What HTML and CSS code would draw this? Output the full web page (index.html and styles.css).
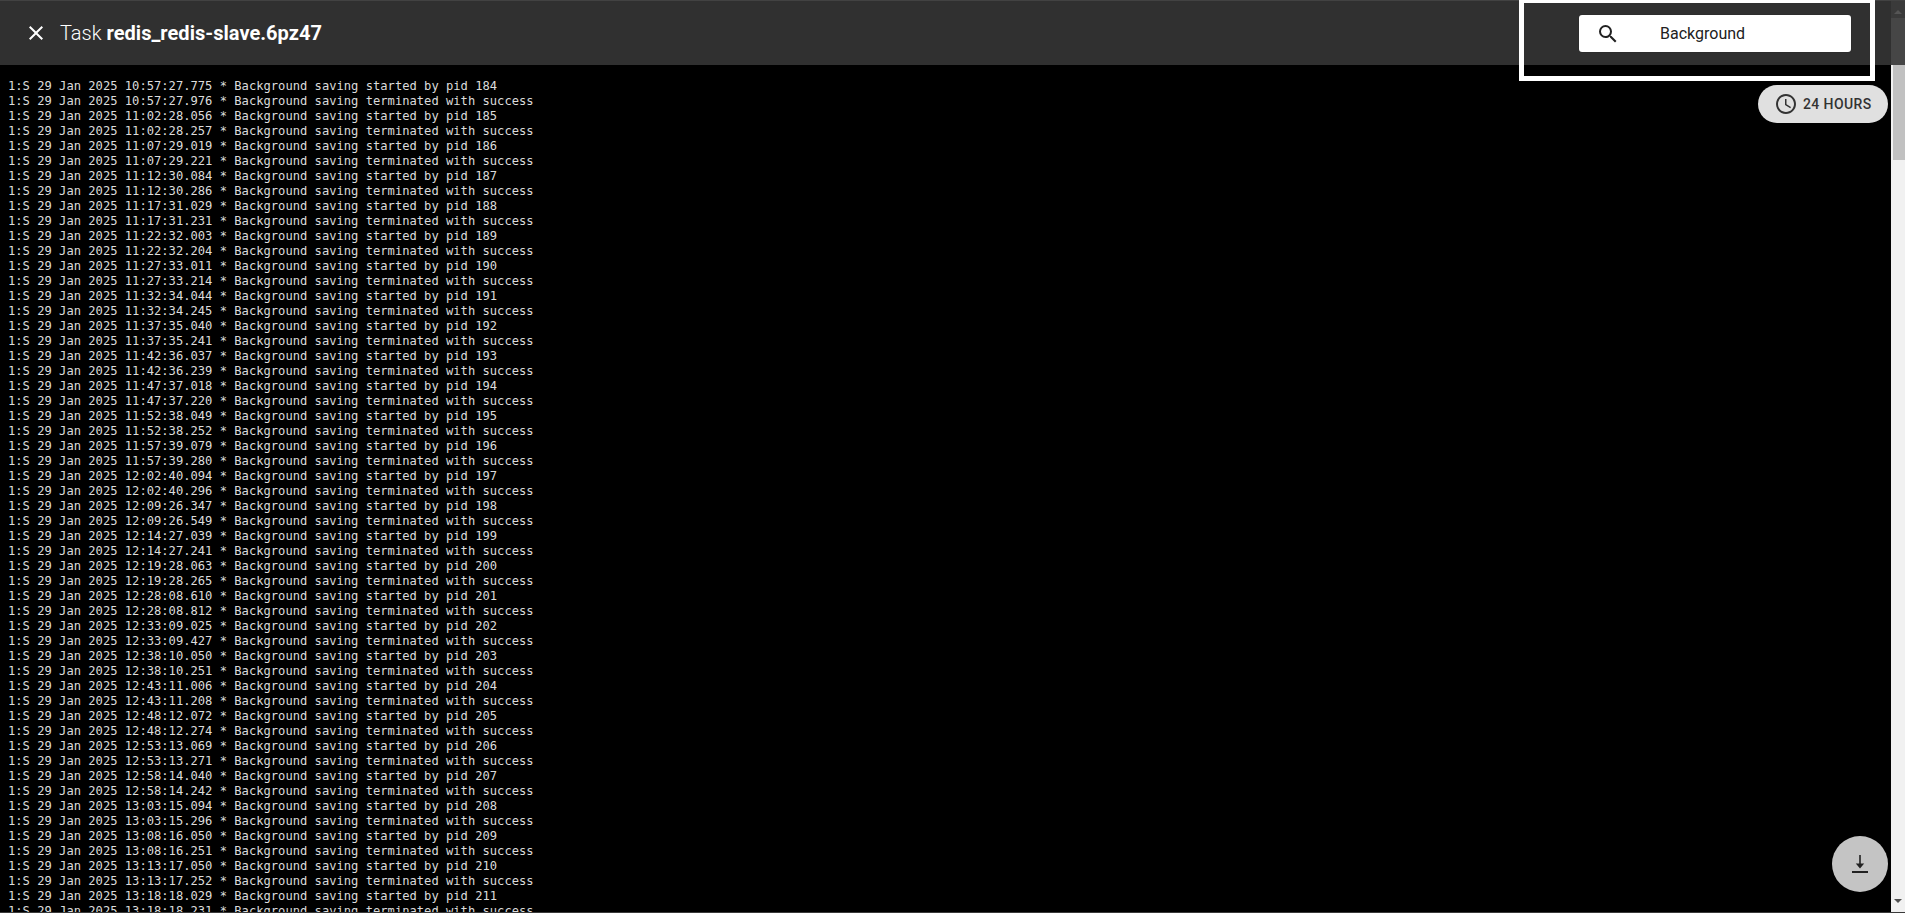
FILE: index.html
```html
<!DOCTYPE html>
<html lang="en">
<head>
<meta charset="utf-8">
<title>Task redis_redis-slave.6pz47</title>
<link rel="stylesheet" href="styles.css">
</head>
<body>
<div class="shell">
  <header class="topbar">
    <svg class="close-icon" viewBox="0 0 24 24" width="24" height="24"><path d="M19 6.41 17.59 5 12 10.59 6.41 5 5 6.41 10.59 12 5 17.59 6.41 19 12 13.41 17.59 19 19 17.59 13.41 12z"/></svg>
    <h1 class="title">Task <strong>redis_redis-slave.6pz47</strong></h1>
    <div class="search-focus">
      <div class="search">
        <svg class="search-icon" viewBox="0 0 24 24" width="24" height="24"><path d="M15.5 14h-.79l-.28-.27A6.471 6.471 0 0 0 16 9.5 6.5 6.5 0 1 0 9.5 16c1.61 0 3.09-.59 4.23-1.57l.27.28v.79l5 4.99L20.49 19l-4.99-5zm-6 0C7.01 14 5 11.99 5 9.5S7.01 5 9.5 5 14 7.01 14 9.5 11.99 14 9.5 14z"/></svg>
        <span class="search-text">Background</span>
      </div>
    </div>
    <div class="bar-scroll"><span class="arrow-up"></span><span class="bar-thumb"></span></div>
  </header>
  <div class="content">
    <main class="log">
      <div>1:S 29 Jan 2025 10:57:27.775 * Background saving started by pid 184</div>
      <div>1:S 29 Jan 2025 10:57:27.976 * Background saving terminated with success</div>
      <div>1:S 29 Jan 2025 11:02:28.056 * Background saving started by pid 185</div>
      <div>1:S 29 Jan 2025 11:02:28.257 * Background saving terminated with success</div>
      <div>1:S 29 Jan 2025 11:07:29.019 * Background saving started by pid 186</div>
      <div>1:S 29 Jan 2025 11:07:29.221 * Background saving terminated with success</div>
      <div>1:S 29 Jan 2025 11:12:30.084 * Background saving started by pid 187</div>
      <div>1:S 29 Jan 2025 11:12:30.286 * Background saving terminated with success</div>
      <div>1:S 29 Jan 2025 11:17:31.029 * Background saving started by pid 188</div>
      <div>1:S 29 Jan 2025 11:17:31.231 * Background saving terminated with success</div>
      <div>1:S 29 Jan 2025 11:22:32.003 * Background saving started by pid 189</div>
      <div>1:S 29 Jan 2025 11:22:32.204 * Background saving terminated with success</div>
      <div>1:S 29 Jan 2025 11:27:33.011 * Background saving started by pid 190</div>
      <div>1:S 29 Jan 2025 11:27:33.214 * Background saving terminated with success</div>
      <div>1:S 29 Jan 2025 11:32:34.044 * Background saving started by pid 191</div>
      <div>1:S 29 Jan 2025 11:32:34.245 * Background saving terminated with success</div>
      <div>1:S 29 Jan 2025 11:37:35.040 * Background saving started by pid 192</div>
      <div>1:S 29 Jan 2025 11:37:35.241 * Background saving terminated with success</div>
      <div>1:S 29 Jan 2025 11:42:36.037 * Background saving started by pid 193</div>
      <div>1:S 29 Jan 2025 11:42:36.239 * Background saving terminated with success</div>
      <div>1:S 29 Jan 2025 11:47:37.018 * Background saving started by pid 194</div>
      <div>1:S 29 Jan 2025 11:47:37.220 * Background saving terminated with success</div>
      <div>1:S 29 Jan 2025 11:52:38.049 * Background saving started by pid 195</div>
      <div>1:S 29 Jan 2025 11:52:38.252 * Background saving terminated with success</div>
      <div>1:S 29 Jan 2025 11:57:39.079 * Background saving started by pid 196</div>
      <div>1:S 29 Jan 2025 11:57:39.280 * Background saving terminated with success</div>
      <div>1:S 29 Jan 2025 12:02:40.094 * Background saving started by pid 197</div>
      <div>1:S 29 Jan 2025 12:02:40.296 * Background saving terminated with success</div>
      <div>1:S 29 Jan 2025 12:09:26.347 * Background saving started by pid 198</div>
      <div>1:S 29 Jan 2025 12:09:26.549 * Background saving terminated with success</div>
      <div>1:S 29 Jan 2025 12:14:27.039 * Background saving started by pid 199</div>
      <div>1:S 29 Jan 2025 12:14:27.241 * Background saving terminated with success</div>
      <div>1:S 29 Jan 2025 12:19:28.063 * Background saving started by pid 200</div>
      <div>1:S 29 Jan 2025 12:19:28.265 * Background saving terminated with success</div>
      <div>1:S 29 Jan 2025 12:28:08.610 * Background saving started by pid 201</div>
      <div>1:S 29 Jan 2025 12:28:08.812 * Background saving terminated with success</div>
      <div>1:S 29 Jan 2025 12:33:09.025 * Background saving started by pid 202</div>
      <div>1:S 29 Jan 2025 12:33:09.427 * Background saving terminated with success</div>
      <div>1:S 29 Jan 2025 12:38:10.050 * Background saving started by pid 203</div>
      <div>1:S 29 Jan 2025 12:38:10.251 * Background saving terminated with success</div>
      <div>1:S 29 Jan 2025 12:43:11.006 * Background saving started by pid 204</div>
      <div>1:S 29 Jan 2025 12:43:11.208 * Background saving terminated with success</div>
      <div>1:S 29 Jan 2025 12:48:12.072 * Background saving started by pid 205</div>
      <div>1:S 29 Jan 2025 12:48:12.274 * Background saving terminated with success</div>
      <div>1:S 29 Jan 2025 12:53:13.069 * Background saving started by pid 206</div>
      <div>1:S 29 Jan 2025 12:53:13.271 * Background saving terminated with success</div>
      <div>1:S 29 Jan 2025 12:58:14.040 * Background saving started by pid 207</div>
      <div>1:S 29 Jan 2025 12:58:14.242 * Background saving terminated with success</div>
      <div>1:S 29 Jan 2025 13:03:15.094 * Background saving started by pid 208</div>
      <div>1:S 29 Jan 2025 13:03:15.296 * Background saving terminated with success</div>
      <div>1:S 29 Jan 2025 13:08:16.050 * Background saving started by pid 209</div>
      <div>1:S 29 Jan 2025 13:08:16.251 * Background saving terminated with success</div>
      <div>1:S 29 Jan 2025 13:13:17.050 * Background saving started by pid 210</div>
      <div>1:S 29 Jan 2025 13:13:17.252 * Background saving terminated with success</div>
      <div>1:S 29 Jan 2025 13:18:18.029 * Background saving started by pid 211</div>
      <div>1:S 29 Jan 2025 13:18:18.231 * Background saving terminated with success</div>
    </main>
    <div class="scrollbar"><span class="thumb"></span><span class="track-fill"></span><span class="arrow-down"></span></div>
    <button class="chip" type="button">
      <svg viewBox="0 0 24 24" width="24" height="24"><path d="M11.99 2C6.47 2 2 6.48 2 12s4.47 10 9.99 10C17.52 22 22 17.52 22 12S17.52 2 11.99 2zM12 20c-4.42 0-8-3.58-8-8s3.58-8 8-8 8 3.58 8 8-3.58 8-8 8zm.5-13H11v6l5.25 3.15.75-1.23-4.5-2.67z"/></svg>
      <span>24 HOURS</span>
    </button>
    <button class="fab" type="button">
      <svg viewBox="0 0 24 24" width="24" height="24"><path d="M4 19h16v2H4zM11.2 3h1.6v8.5h3.4L12 16.5l-4.2-5h3.4z"/></svg>
    </button>
  </div>
</div>
</body>
</html>
```

FILE: styles.css
```css
* { box-sizing: border-box; }
html, body { margin: 0; height: 100%; overflow: hidden; background: #000; }
.shell {
  display: flex;
  flex-direction: column;
  height: 100vh;
  border-bottom: 1px solid #3a3a3a;
  font-family: Roboto, "Liberation Sans", sans-serif;
}
.topbar {
  position: relative;
  z-index: 2;
  flex: 0 0 65px;
  min-height: 0;
  display: flex;
  align-items: flex-start;
  background: #303030;
  border-top: 1px solid #424242;
  color: #fff;
}
.close-icon { flex: none; margin: 20px 0 0 24px; fill: #fff; }
.title {
  margin: 19px 0 0 12px;
  font-size: 20px;
  line-height: 26px;
  font-weight: 300;
  letter-spacing: .03px;
  white-space: nowrap;
}
.title strong { font-weight: 700; }
.search-focus {
  flex: none;
  margin: 2px 21px 0 auto;
  width: 346px;
  height: 73px;
  padding: 12px 19px 0 55px;
  outline: 5px solid #fff;
}
.search {
  display: flex;
  align-items: center;
  height: 37px;
  padding-left: 17px;
  background: #fff;
  border-radius: 3px;
  box-shadow: 0 0 1px rgba(0,0,0,.5);
  color: #212121;
  font-size: 16px;
}
.search-icon { flex: none; fill: #212121; }
.search-text { margin-left: 40px; }
.bar-scroll {
  flex: 0 0 14px;
  height: 64px;
  display: flex;
  flex-direction: column;
  align-items: center;
  background: #3a3a3a;
}
.arrow-up {
  margin-top: 9px;
  border: 4px solid transparent;
  border-top: 0;
  border-bottom: 4px solid #555;
}
.bar-thumb { margin-top: 4px; flex: 1; width: 100%; background: #464646; }
.content { position: relative; flex: 1; min-height: 0; display: flex; }
.log {
  flex: 1;
  min-width: 0;
  padding: 14px 0 0 8px;
  overflow: hidden;
  background: #000;
  color: #dcdcdc;
  font-family: "DejaVu Sans Mono", "Liberation Mono", monospace;
  font-size: 12.13px;
  line-height: 15px;
  white-space: nowrap;
}
.scrollbar {
  flex: 0 0 14px;
  display: flex;
  flex-direction: column;
  align-items: center;
  background: #f1f1f1;
}
.thumb { flex: 0 0 95px; width: 100%; background: #c1c1c1; border-left: 2px solid #f1f1f1; }
.track-fill { flex: 1; }
.arrow-down {
  margin-bottom: 9px;
  border: 4px solid transparent;
  border-bottom: 0;
  border-top: 4px solid #505050;
}
.chip {
  position: absolute;
  top: 20px;
  right: 17px;
  width: 130px;
  height: 38px;
  display: flex;
  align-items: center;
  gap: 5px;
  padding: 0 0 0 16px;
  border: 0;
  border-radius: 19px;
  background: #e0e0e0;
  color: #333;
  font: 500 14px/1 Roboto, sans-serif;
  letter-spacing: .4px;
}
.chip svg { flex: none; fill: #333; }
.fab {
  position: absolute;
  right: 17px;
  bottom: 20px;
  width: 56px;
  height: 56px;
  display: flex;
  align-items: center;
  justify-content: center;
  padding: 0;
  border: 0;
  border-radius: 50%;
  background: #c4c4c4;
}
.fab svg { fill: #212121; }
```
